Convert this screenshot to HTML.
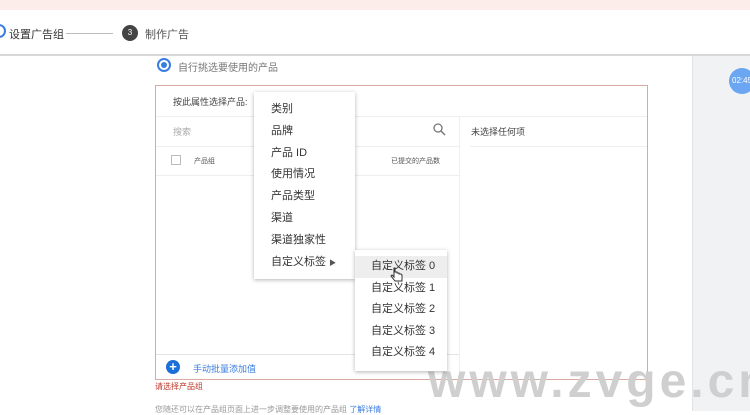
<!DOCTYPE html>
<html><head><meta charset="utf-8"><style>
*{margin:0;padding:0;box-sizing:border-box}
body{width:750px;height:411px;overflow:hidden;background:#fff;font-family:"Liberation Sans","Noto Sans CJK SC",sans-serif;position:relative;color:#444}
.a{position:absolute}
.t{font-size:10px;white-space:nowrap}
</style></head><body>
<div class="a" style="left:0;top:0;width:750px;height:10px;background:#fcecea"></div>
<div class="a" style="left:0;top:54px;width:750px;height:2px;background:#d8d8d8"></div>
<div class="a" style="left:692px;top:56px;width:58px;height:355px;background:#f1f2f4;border-left:1px solid #e4e4e4"></div>
<div class="a" style="left:729px;top:68px;width:26px;height:26px;border-radius:50%;background:#6aa6f2;color:#fff;font-size:8px;line-height:26px;padding-left:3px">02:45</div>
<!-- header -->
<div class="a" style="left:-8px;top:24px;width:14px;height:14px;border-radius:50%;border:2px solid #3a7de0"></div>
<div class="a t" style="left:9px;top:26px;font-size:11px;color:#333">设置广告组</div>
<div class="a" style="left:66px;top:33px;width:47px;height:1px;background:#bbb"></div>
<div class="a" style="left:122px;top:25px;width:16px;height:16px;border-radius:50%;background:#444;color:#fff;font-size:8px;line-height:16px;text-align:center">3</div>
<div class="a t" style="left:145px;top:26px;font-size:11px;color:#555">制作广告</div>
<!-- radio -->
<div class="a" style="left:157px;top:58px;width:14px;height:14px;border-radius:50%;border:2px solid #3a7de0"></div>
<div class="a" style="left:161px;top:62px;width:6px;height:6px;border-radius:50%;background:#3a7de0"></div>
<div class="a t" style="left:178px;top:59px;color:#777">自行挑选要使用的产品</div>
<!-- box -->
<div class="a" style="left:155px;top:85px;width:493px;height:295px;border:1px solid #d9aaa2"></div>
<div class="a t" style="left:173px;top:95px;font-size:9px;color:#444">按此属性选择产品:</div>
<div class="a" style="left:156px;top:116px;width:491px;height:1px;background:#eee"></div>
<div class="a" style="left:459px;top:116px;width:1px;height:263px;background:#eee"></div>
<div class="a t" style="left:173px;top:125px;color:#aaa;font-size:9px">搜索</div>
<svg class="a" style="left:433px;top:123px" width="13" height="13"><circle cx="5" cy="5" r="4" fill="none" stroke="#777" stroke-width="1.3"/><path d="M8 8l4 4" stroke="#777" stroke-width="1.5"/></svg>
<div class="a t" style="left:471px;top:125px;color:#444;font-size:9px">未选择任何项</div>
<div class="a" style="left:156px;top:146px;width:303px;height:1px;background:#eee"></div>
<div class="a" style="left:470px;top:146px;width:177px;height:1px;background:#eee"></div>
<div class="a" style="left:171px;top:155px;width:10px;height:10px;border:1px solid #bbb"></div>
<div class="a t" style="left:194px;top:156px;font-size:7px;color:#555">产品组</div>
<div class="a t" style="left:391px;top:156px;font-size:7px;color:#555">已提交的产品数</div>
<div class="a" style="left:156px;top:175px;width:303px;height:1px;background:#eee"></div>
<div class="a" style="left:156px;top:354px;width:303px;height:1px;background:#e4e4e4"></div>
<div class="a" style="left:166px;top:360px;width:14px;height:14px;border-radius:50%;background:#1a6fd8;color:#fff;font-size:13px;line-height:13px;text-align:center;font-weight:bold">+</div>
<div class="a t" style="left:193px;top:362px;font-size:9px;color:#3a7de0">手动批量添加值</div>
<div class="a t" style="left:155px;top:381px;font-size:8px;color:#c0392b">请选择产品组</div>
<div class="a t" style="left:155px;top:404px;font-size:8px;color:#999">您随还可以在产品组页面上进一步调整要使用的产品组 <span style="color:#3a7de0">了解详情</span></div>
<!-- watermark -->
<div class="a" style="left:428px;top:354px;font-size:48px;font-weight:bold;color:#cfcfcf;letter-spacing:4px;white-space:nowrap">www.zvge.cn</div>
<!-- menu -->
<div class="a" style="left:254px;top:92px;width:101px;height:187px;background:#fff;box-shadow:0 1px 4px rgba(0,0,0,.3)"></div>
<div class="a" style="left:271px;top:99px;font-size:11px;line-height:21.8px;color:#333">类别<br>品牌<br>产品 ID<br>使用情况<br>产品类型<br>渠道<br>渠道独家性<br>自定义标签 <span style="font-size:7px;color:#555">▶</span></div>
<div class="a" style="left:355px;top:250px;width:92px;height:121px;background:#fff;box-shadow:0 1px 4px rgba(0,0,0,.3)"></div>
<div class="a" style="left:355px;top:256px;width:92px;height:22px;background:#eee"></div>
<div class="a" style="left:371px;top:256px;font-size:11px;line-height:21.6px;color:#333">自定义标签 0<br>自定义标签 1<br>自定义标签 2<br>自定义标签 3<br>自定义标签 4</div>
<svg class="a" style="left:390px;top:267px" width="14" height="16"><path d="M4 1v9l-2-2-1 1 4 5h7v-6l-1-1-2 0v-1l-2 0v-1l-2 0v-4z" fill="#fff" stroke="#333" stroke-width="1"/></svg>
</body></html>
